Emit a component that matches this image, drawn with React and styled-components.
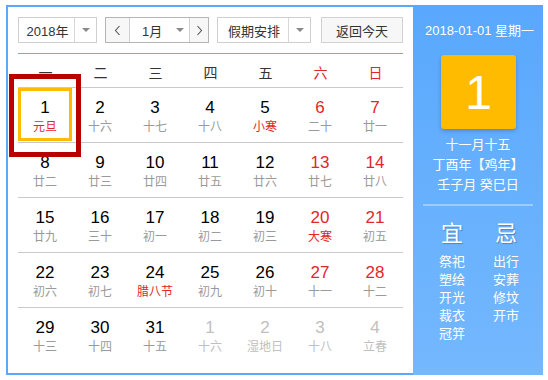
import React from "react";
import styled, { createGlobalStyle } from "styled-components";

const Global = createGlobalStyle`
  html, body { margin: 0; padding: 0; background: #fff; }
  body { font-family: "Liberation Sans", "Noto Sans CJK SC", sans-serif; }
`;

const FONT = `"Liberation Sans", "Noto Sans CJK SC", sans-serif`;

const Widget = styled.div`
  display: flex;
  margin: 5px 0 0 6px;
  width: 537px;
  height: 370px;
  font-family: ${FONT};
`;

const Main = styled.div`
  position: relative;
  width: 385px;
  box-sizing: content-box;
  padding: 10px 10px 0 10px;
  border: 2px solid #5aa9fd;
  border-right: none;
  background: #fff;
`;

const Toolbar = styled.div`
  display: flex;
  align-items: center;
  height: 26px;
  padding-bottom: 10px;
  border-bottom: 1px solid #62acf6;
`;

const Box = styled.div`
  display: flex;
  height: 26px;
  box-sizing: border-box;
  border: 1px solid ${(p) => p.$border || "#cfcfcf"};
  background: #fff;
  margin-left: ${(p) => p.$ml || 0}px;
  width: ${(p) => p.$w}px;
`;

const Seg = styled.div`
  display: flex;
  align-items: center;
  justify-content: ${(p) => p.$justify || "center"};
  width: ${(p) => p.$w}px;
  height: 100%;
  box-sizing: border-box;
  padding-left: ${(p) => p.$pl || 0}px;
  font-size: 13px;
  color: #333;
  background: ${(p) => p.$bg || "transparent"};
  border-left: ${(p) => (p.$div ? `1px solid ${p.$div}` : "none")};
`;

const Caret = styled.span`
  width: 0;
  height: 0;
  border-left: 4px solid transparent;
  border-right: 4px solid transparent;
  border-top: 4px solid #8a8a8a;
  margin-left: ${(p) => p.$ml || 0}px;
`;

const Chev = styled.svg`
  width: 7px;
  height: 11px;
`;

const TodayBtn = styled.div`
  margin-left: 10px;
  width: 82px;
  height: 26px;
  box-sizing: border-box;
  border: 1px solid #d2d2d2;
  background: #f7f7f7;
  font-size: 13px;
  color: #333;
  display: flex;
  align-items: center;
  justify-content: center;
`;

const WeekHead = styled.div`
  display: grid;
  grid-template-columns: repeat(7, 55px);
  height: 33px;
  align-items: center;
  border-bottom: 1px solid #cacaca;
`;

const WeekName = styled.div`
  text-align: center;
  font-size: 14px;
  color: ${(p) => (p.$red ? "#e2262c" : "#333")};
  padding-top: 2px;
`;

const Row = styled.div`
  display: grid;
  grid-template-columns: repeat(7, 55px);
  height: 54px;
  border-top: ${(p) => (p.$line ? "1px solid #cacaca" : "none")};
`;

const Cell = styled.div`
  display: flex;
  flex-direction: column;
  align-items: center;
  box-sizing: border-box;
  width: 54px;
  height: 53px;
  padding-top: ${(p) => (p.$sel ? 7 : 10)}px;
  border: ${(p) => (p.$sel ? "3px solid #ffbb00" : "none")};
`;

const Num = styled.div`
  font-size: 17px;
  line-height: 20px;
  color: ${(p) => p.$c};
`;

const Lunar = styled.div`
  margin-top: 1px;
  font-size: 12px;
  line-height: 16px;
  color: ${(p) => p.$c};
  white-space: nowrap;
`;

const Mark = styled.div`
  position: absolute;
  left: 1px;
  top: 67px;
  width: 72px;
  height: 83px;
  box-sizing: border-box;
  border: 5px solid #bb0000;
  pointer-events: none;
`;

const Side = styled.div`
  width: 130px;
  height: 370px;
  background: linear-gradient(to bottom, #59a8fd, #74b8fe);
  color: #fff;
  display: flex;
  flex-direction: column;
  align-items: center;
`;

const DateLine = styled.div`
  margin-top: 18px;
  font-size: 13px;
  line-height: 16px;
  padding-left: 3px;
`;

const BigDay = styled.div`
  margin-top: 16px;
  width: 75px;
  height: 74px;
  border-radius: 3px;
  background: #ffbb00;
  box-shadow: 0 2px 4px rgba(0, 0, 0, 0.2);
  display: flex;
  align-items: center;
  justify-content: center;
  font-size: 48px;
  color: #fff;
  padding-left: 1px;
  box-sizing: border-box;
`;

const LunarInfo = styled.div`
  margin-top: 6px;
  text-align: center;
  font-size: 13px;
  line-height: 20px;
`;

const Sep = styled.div`
  margin-top: 9px;
  width: 110px;
  height: 2px;
  background: rgba(255, 255, 255, 0.35);
`;

const Advice = styled.div`
  align-self: stretch;
  display: grid;
  grid-template-columns: 54px 54px;
  padding-left: 12px;
  margin-top: 15px;
`;

const AdviceCol = styled.div`
  display: flex;
  flex-direction: column;
  align-items: center;
`;

const AdviceTitle = styled.div`
  font-size: 22px;
  line-height: 26px;
  text-shadow: 1px 1px 1px rgba(0, 0, 0, 0.25);
  margin-bottom: 6px;
`;

const AdviceItem = styled.div`
  font-size: 13px;
  line-height: 18px;
`;

const weeks = ["一", "二", "三", "四", "五", "六", "日"];

const raw = [
  [1, "元旦", 1], [2, "十六"], [3, "十七"], [4, "十八"], [5, "小寒", 1], [6, "二十"], [7, "廿一"],
  [8, "廿二"], [9, "廿三"], [10, "廿四"], [11, "廿五"], [12, "廿六"], [13, "廿七"], [14, "廿八"],
  [15, "廿九"], [16, "三十"], [17, "初一"], [18, "初二"], [19, "初三"], [20, "大寒", 1], [21, "初五"],
  [22, "初六"], [23, "初七"], [24, "腊八节", 1], [25, "初九"], [26, "初十"], [27, "十一"], [28, "十二"],
  [29, "十三"], [30, "十四"], [31, "十五"], [1, "十六", 0, 1], [2, "湿地日", 0, 1], [3, "十八", 0, 1], [4, "立春", 0, 1],
];

const rows = [0, 1, 2, 3, 4].map((r) => raw.slice(r * 7, r * 7 + 7));

function ChevronIcon({ dir }) {
  return (
    <Chev viewBox="0 0 7 11">
      <path
        d={dir === "left" ? "M5.5 1 L1.5 5.5 L5.5 10" : "M1.5 1 L5.5 5.5 L1.5 10"}
        fill="none"
        stroke="#555"
        strokeWidth="1.1"
      />
    </Chev>
  );
}

export default function App() {
  return (
    <>
      <Global />
      <Widget>
        <Main>
          <Toolbar>
            <Box $w={79}>
              <Seg $w={55} $pl={2}>2018年</Seg>
              <Seg $w={22} $div="#d8d8d8"><Caret /></Seg>
            </Box>
            <Box $w={104} $ml={8} $border="#b5b5b5">
              <Seg $w={23} $bg="#f7f7f7"><ChevronIcon dir="left" /></Seg>
              <Seg $w={60} $div="#d0d0d0" $justify="flex-start" $pl={12}>
                1月<Caret $ml={14} />
              </Seg>
              <Seg $w={19} $div="#d0d0d0" $bg="#f7f7f7"><ChevronIcon dir="right" /></Seg>
            </Box>
            <Box $w={94} $ml={8}>
              <Seg $w={70} $pl={2}>假期安排</Seg>
              <Seg $w={22} $div="#d8d8d8"><Caret /></Seg>
            </Box>
            <TodayBtn>返回今天</TodayBtn>
          </Toolbar>
          <WeekHead>
            {weeks.map((w, i) => (
              <WeekName key={w} $red={i >= 5}>{w}</WeekName>
            ))}
          </WeekHead>
          {rows.map((row, ri) => (
            <Row key={ri} $line={ri > 0}>
              {row.map(([d, l, hol, other], ci) => {
                const numC = other ? "#c0c0c0" : ci >= 5 ? "#e2262c" : "#000";
                const lunC = other ? "#c0c0c0" : hol ? "#e2262c" : "#9a9a9a";
                return (
                  <Cell key={ci} $sel={ri === 0 && ci === 0}>
                    <Num $c={numC}>{d}</Num>
                    <Lunar $c={lunC}>{l}</Lunar>
                  </Cell>
                );
              })}
            </Row>
          ))}
          <Mark />
        </Main>
        <Side>
          <DateLine>2018-01-01 星期一</DateLine>
          <BigDay>1</BigDay>
          <LunarInfo>
            <div>十一月十五</div>
            <div>丁酉年【鸡年】</div>
            <div>壬子月 癸巳日</div>
          </LunarInfo>
          <Sep />
          <Advice>
            <AdviceCol>
              <AdviceTitle>宜</AdviceTitle>
              {["祭祀", "塑绘", "开光", "裁衣", "冠笄"].map((t) => (
                <AdviceItem key={t}>{t}</AdviceItem>
              ))}
            </AdviceCol>
            <AdviceCol>
              <AdviceTitle>忌</AdviceTitle>
              {["出行", "安葬", "修坟", "开市"].map((t) => (
                <AdviceItem key={t}>{t}</AdviceItem>
              ))}
            </AdviceCol>
          </Advice>
        </Side>
      </Widget>
    </>
  );
}
